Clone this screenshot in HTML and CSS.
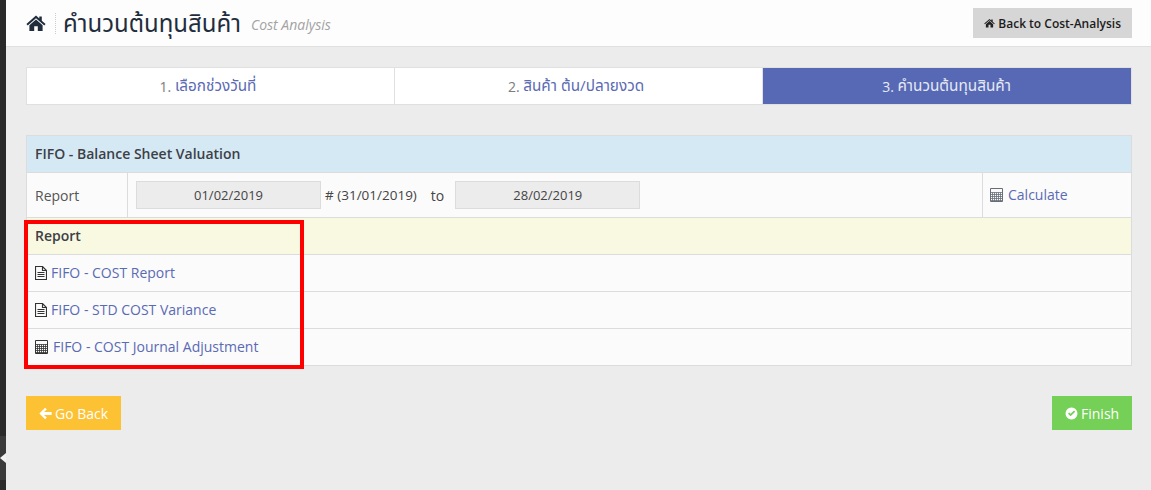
FILE: index.html
```html
<!DOCTYPE html>
<html lang="th">
<head>
<meta charset="utf-8">
<title>Cost Analysis</title>
<link rel="stylesheet" href="styles.css">
</head>
<body>
<div class="app">
  <aside class="rail"><span class="rail-toggle"><span class="rail-arrow"></span></span></aside>
  <main class="main">
    <header class="topbar">
      <svg class="home" viewBox="0 0 20 16"><path d="M10 0.6 L13.3 3.5 V1.6 H15.8 V5.7 L19.6 9 L18.3 10.4 L10 3.2 L1.7 10.4 L0.4 9 Z M3.4 10.2 L10 4.5 L16.6 10.2 V16 H11.8 V11.3 H8.2 V16 H3.4 Z" fill="#1f2d3d"/></svg>
      <span class="sep"></span>
      <h1 class="title">คำนวนต้นทุนสินค้า</h1>
      <span class="subtitle">Cost Analysis</span>
      <a class="back"><svg class="home-s" viewBox="0 0 20 16"><path d="M10 0.6 L13.3 3.5 V1.6 H15.8 V5.7 L19.6 9 L18.3 10.4 L10 3.2 L1.7 10.4 L0.4 9 Z M3.4 10.2 L10 4.5 L16.6 10.2 V16 H11.8 V11.3 H8.2 V16 H3.4 Z" fill="#222"/></svg> Back to Cost-Analysis</a>
    </header>
    <div class="content">
      <nav class="steps">
        <div class="step"><span class="num">1. </span><a class="thai">เลือกช่วงวันที่</a></div>
        <div class="step"><span class="num">2. </span><a class="thai">สินค้า ต้น/ปลายงวด</a></div>
        <div class="step active"><span class="num">3. </span><span class="thai">คำนวนต้นทุนสินค้า</span></div>
      </nav>
      <section class="panel">
        <div class="row head-blue"><span class="lift">FIFO - Balance Sheet Valuation</span></div>
        <div class="row report-row">
          <div class="cell label">Report</div>
          <div class="cell dates">
            <span class="date">01/02/2019</span>
            <span class="txt"># (31/01/2019)</span>
            <span class="to">to</span>
            <span class="date">28/02/2019</span>
          </div>
          <div class="cell calc">
            <svg class="ico-calc" viewBox="0 0 13 14"><use href="#calc"/></svg><a class="lift">Calculate</a>
          </div>
        </div>
        <div class="row head-yellow"><span class="lift">Report</span></div>
        <div class="row link-row">
          <svg class="ico-doc" viewBox="0 0 12 14"><use href="#doc"/></svg><a class="lift">FIFO - COST Report</a>
        </div>
        <div class="row link-row">
          <svg class="ico-doc" viewBox="0 0 12 14"><use href="#doc"/></svg><a class="lift">FIFO - STD COST Variance</a>
        </div>
        <div class="row link-row">
          <svg class="ico-calc dark" viewBox="0 0 13 14"><use href="#calc"/></svg><a class="lift">FIFO - COST Journal Adjustment</a>
        </div>
        <div class="highlight"></div>
      </section>
      <div class="actions">
        <a class="btn warn"><svg class="ico-btn" viewBox="0 0 14 14"><path d="M6.6 .8 L8.4 2.6 L5.4 5.5 H13.6 V8.5 H5.4 L8.4 11.4 L6.6 13.2 L.4 7 Z" fill="#fff"/></svg> Go Back</a>
        <a class="btn ok"><svg class="ico-btn" viewBox="0 0 14 14"><path fill-rule="evenodd" d="M7 .6 A6.4 6.4 0 1 1 6.99 .6 Z M3.2 7.2 L6 10 L11 5 L9.7 3.7 L6 7.4 L4.5 5.9 Z" fill="#fff"/></svg> Finish</a>
      </div>
    </div>
  </main>
</div>
<svg class="defs" width="0" height="0">
  <symbol id="doc" viewBox="0 0 12 14"><path d="M1 .5 H7.5 L11.5 4.5 V13.5 H.5 V.5 Z M7.5 .5 V4.5 H11.5 M2.5 6.5 H9.5 M2.5 8.5 H9.5 M2.5 10.5 H9.5" fill="none" stroke="currentColor" stroke-width="1.15"/></symbol>
  <symbol id="calc" viewBox="0 0 13 14"><path d="M.5 .5 H12.5 V13.5 H.5 Z" fill="none" stroke="currentColor"/><path d="M.5 4.5 H12.5 M.5 6.5 H12.5 M.5 8.5 H12.5 M.5 10.5 H12.5 M.5 12.5 H12.5 M2.5 4.5 V13.5 M4.5 4.5 V13.5 M6.5 4.5 V13.5 M8.5 4.5 V13.5 M10.5 4.5 V13.5" fill="none" stroke="currentColor" stroke-width=".8"/></symbol>
</svg>
</body>
</html>
```
FILE: styles.css
```css
* { box-sizing: border-box; }
html, body { margin: 0; height: 100%; overflow: hidden; }
body {
  font-family: "Open Sans", "Noto Sans", "Noto Sans Thai", "DejaVu Sans", sans-serif;
  font-size: 14px;
  color: #333;
  background: #ececec;
}
a { color: #5a6ab4; text-decoration: none; }
.app { display: flex; height: 490px; }
.rail { width: 6px; flex: none; background: #2a2a2a; padding-top: 436px; }
.rail-toggle { display: flex; align-items: center; height: 44px; background: #3a3a3a; }
.rail-arrow { width: 0; height: 0; border: 5px solid transparent; border-left-width: 0; border-right: 6px solid #f2f2f2; }
.main { flex: 1; min-width: 0; }
.topbar {
  display: flex; align-items: center; height: 47px;
  padding: 0 19px 0 20px;
  background: #fdfdfd; border-bottom: 1px solid #e0e0e0;
}
.home { width: 20px; height: 16px; flex: none; }
.sep { width: 0; height: 21px; margin: 0 7px 0 9px; border-left: 1px dotted #ccc; }
.title { margin: 0; font-size: 24px; line-height: 28px; font-weight: 400; color: #1f2d3d; }
.subtitle { margin-left: 10px; padding-top: 3px; font-size: 14px; font-style: italic; color: #a3a3a3; }
.back {
  margin-left: auto; display: flex; align-items: center; gap: 3px;
  height: 30px; padding: 0 11px;
  background: #d6d6d6; color: #1c1c1c; font-size: 12px; font-weight: 600;
}
.home-s { width: 11px; height: 10px; }
.content { padding: 20px 19px 0 20px; }
.steps { display: grid; grid-template-columns: 368px 368px 1fr; height: 38px; border: 1px solid #e0e0e0; background: #fff; }
.step { display: flex; align-items: center; justify-content: center; padding-right: 5px; border-right: 1px solid #e0e0e0; color: #7c7c7c; white-space: pre; }
.step:last-child { border-right: 0; }
.step.active { padding-right: 1px; background: #5769b4; color: #e6e9f5; }
.thai { font-size: 15.3px; }
.panel { position: relative; margin-top: 30px; background: #fbfbfb; border: 1px solid #dcdcdc; border-bottom: 0; }
.row { border-bottom: 1px solid #dcdcdc; display: flex; align-items: center; }
.lift { margin-bottom: 2px; }
.head-blue { height: 37px; padding-left: 8px; background: #d5e9f5; font-weight: 600; color: #3d4046; }
.report-row { height: 45px; align-items: stretch; }
.cell { display: flex; align-items: center; }
.label { width: 101px; padding-left: 8px; border-right: 1px solid #dcdcdc; color: #555; }
.dates { flex: 1; padding-left: 8px; gap: 4px; color: #444; }
.date { display: block; width: 185px; height: 28px; line-height: 26px; text-align: center; background: #ececec; border: 1px solid #dcdcdc; font-size: 13px; }
.txt { font-size: 13.5px; }
.to { margin: 0 7px 0 10px; }
.calc { width: 149px; padding-left: 7px; gap: 5px; border-left: 1px solid #dcdcdc; }
.head-yellow { height: 37px; padding-left: 8px; background: #f9f9e1; font-weight: 600; color: #3d4046; }
.link-row { height: 37px; padding-left: 8px; gap: 4px; }
.ico-doc { width: 12px; height: 14px; color: #333; }
.ico-calc { width: 13px; height: 14px; color: #666e78; flex: none; }
.ico-calc.dark { color: #333; margin-right: 1px; }
.highlight { position: absolute; left: -3px; top: 84px; width: 280px; height: 149px; border: 4px solid #f00; pointer-events: none; }
.actions { display: flex; justify-content: space-between; margin-top: 30px; }
.btn { display: flex; align-items: center; gap: 3px; height: 34px; color: #fff; }
.warn { width: 95px; padding-left: 13px; background: #fdc134; }
.ok { width: 80px; padding-left: 13px; background: #74d056; }
.ico-btn { width: 13px; height: 13px; }
.defs { position: absolute; }
```
